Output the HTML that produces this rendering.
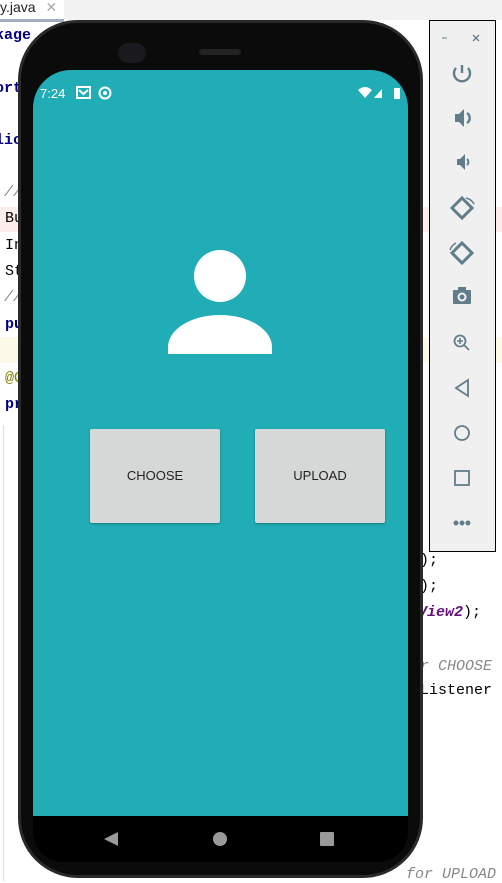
<!DOCTYPE html>
<html><head><style>
*{margin:0;padding:0;box-sizing:border-box}
body{width:502px;height:881px;overflow:hidden;background:#fff;position:relative;font-family:"Liberation Sans",sans-serif}
.c{position:absolute;font-family:"Liberation Mono",monospace;font-size:15px;font-weight:bold;color:#000080;white-space:nowrap}
.a{position:absolute}
</style></head><body>
<div class="a" style="left:0;top:0;width:502px;height:20px;background:#f2f2f2"></div>
<div class="a" style="left:0;top:0;width:64px;height:20px;background:#fff;font-size:14px;color:#222;line-height:15px">y.java <span style="color:#aaa;margin-left:6px">✕</span></div>
<div class="a" style="left:0;top:19px;width:64px;height:3px;background:#a0aec0"></div>
<div class="a" style="left:0;top:207px;width:502px;height:25px;background:#fbeee9"></div>
<div class="a" style="left:0;top:337px;width:502px;height:26px;background:#fdf9e8"></div>
<div class="c" style="left:-5px;top:27px">kage</div>
<div class="c" style="left:-5px;top:80px">ort</div>
<div class="c" style="left:-5px;top:132px">lic</div>
<div class="c" style="left:4px;top:184px;color:#888;font-weight:normal;font-style:italic">//</div>
<div class="c" style="left:5px;top:210px;color:#000;font-weight:normal">Bu</div>
<div class="c" style="left:5px;top:237px;color:#000;font-weight:normal">In</div>
<div class="c" style="left:5px;top:263px;color:#000;font-weight:normal">St</div>
<div class="c" style="left:4px;top:289px;color:#888;font-weight:normal;font-style:italic">//</div>
<div class="c" style="left:5px;top:316px">pu</div>
<div class="c" style="left:5px;top:370px;color:#808000;font-weight:normal">@O</div>
<div class="c" style="left:5px;top:396px">pr</div>
<div class="c" style="left:420px;top:552px;color:#000;font-weight:normal">);</div>
<div class="c" style="left:420px;top:578px;color:#000;font-weight:normal">);</div>
<div class="c" style="left:418px;top:604px;color:#660e7a;font-style:italic">View2<span style="color:#000;font-style:normal;font-weight:normal">);</span></div>
<div class="c" style="left:420px;top:658px;color:#888;font-weight:normal;font-style:italic">r CHOOSE</div>
<div class="c" style="left:420px;top:682px;color:#000;font-weight:normal">Listener</div>
<div class="c" style="left:406px;top:866px;color:#888;font-weight:normal;font-style:italic">for UPLOAD</div>
<div class="a" style="left:3px;top:425px;width:1px;height:456px;background:#ddd"></div>

<div class="a" style="left:18px;top:20px;width:405px;height:858px;background:#0b0b0c;border-radius:60px;border:3px solid #2a2a2a"></div>
<div class="a" style="left:118px;top:43px;width:28px;height:20px;border-radius:10px;background:#1a1a1e"></div>
<div class="a" style="left:199px;top:49px;width:42px;height:6px;border-radius:3px;background:#222"></div>
<div class="a" style="left:33px;top:70px;width:375px;height:746px;background:#21adb5;border-radius:38px 38px 0 0"></div>
<div class="a" style="left:33px;top:816px;width:375px;height:46px;background:#000;border-radius:0 0 30px 30px"></div>
<div class="a" style="left:40px;top:86px;font-size:13px;color:#fff">7:24</div>
<svg class="a" style="left:76px;top:86px" width="36" height="14"><rect x="1" y="1" width="13" height="11" fill="none" stroke="#fff" stroke-width="2"/><path d="M3 4l4.5 4L12 4" stroke="#fff" stroke-width="2" fill="none"/><circle cx="29" cy="7" r="5.5" fill="none" stroke="#fff" stroke-width="2"/><circle cx="29" cy="7" r="2" fill="#fff"/></svg>
<svg class="a" style="left:358px;top:86px" width="46" height="14"><path d="M0 4Q7-2 14 4L7 12Z" fill="#fff"/><path d="M16 12L24 3V12Z" fill="#fff"/><rect x="36" y="2" width="6" height="11" fill="#fff"/></svg>
<div class="a" style="left:194px;top:250px;width:52px;height:52px;border-radius:50%;background:#fff"></div>
<div class="a" style="left:168px;top:315px;width:104px;height:39px;background:#fff;border-radius:52px 52px 0 0/32px 32px 0 0"></div>
<div class="a" style="left:90px;top:429px;width:130px;height:94px;background:#d6d7d7;border-radius:2px;box-shadow:0 1px 2px rgba(0,0,0,.3);font-size:13px;color:#222;text-align:center;line-height:94px">CHOOSE</div>
<div class="a" style="left:255px;top:429px;width:130px;height:94px;background:#d6d7d7;border-radius:2px;box-shadow:0 1px 2px rgba(0,0,0,.3);font-size:13px;color:#222;text-align:center;line-height:94px">UPLOAD</div>
<svg class="a" style="left:100px;top:828px" width="240" height="22"><path d="M4 11L18 4V18Z" fill="#9a9a9a"/><circle cx="120" cy="11" r="7" fill="#9a9a9a"/><rect x="220" y="4" width="14" height="14" rx="1" fill="#9a9a9a"/></svg>

<div class="a" style="left:429px;top:20px;width:67px;height:532px;background:#f0f0f0;border:1px solid #000"></div>
<svg class="a" style="left:429px;top:20px" width="67" height="532" fill="none" stroke="#607d8b" stroke-width="2.4">
<path d="M13 18h5" stroke-width="1"/><path d="M44 15l6 6M50 15l-6 6" stroke-width="1.3"/>
<path d="M33 45v8M27 48a8 8 0 1 0 12 0"/>
<path d="M26 94h4l5-5v18l-5-5h-4z" fill="#607d8b" stroke="none"/><path d="M38 93a6 6 0 0 1 0 10" />
<path d="M28 139h3l5-5v16l-5-5h-3z" fill="#607d8b" stroke="none"/><path d="M38 139a4 4 0 0 1 0 6" stroke-width="2"/>
<path d="M33 178l10 10-10 10-10-10z" stroke-width="3"/><path d="M37 178a12 12 0 0 1 8 6" stroke-width="1.5"/>
<path d="M33 223l10 10-10 10-10-10z" stroke-width="3"/><path d="M21 230a12 12 0 0 1 6-7" stroke-width="1.5"/>
<rect x="24" y="270" width="18" height="14" rx="1" fill="#607d8b" stroke="none"/><rect x="29" y="267" width="8" height="4" fill="#607d8b" stroke="none"/><circle cx="33" cy="277" r="3.5" stroke="#f0f0f0" stroke-width="2"/>
<circle cx="31" cy="321" r="5.5" stroke-width="1.8"/><path d="M35 325l5 5M31 318v6M28 321h6" stroke-width="1.6"/>
<path d="M39 360v16l-12-8z" stroke-width="1.8"/>
<circle cx="33" cy="413" r="7" stroke-width="1.8"/>
<rect x="26" y="451" width="14" height="14" stroke-width="1.8"/>
<circle cx="27" cy="503" r="1.3" fill="#607d8b"/><circle cx="33" cy="503" r="1.3" fill="#607d8b"/><circle cx="39" cy="503" r="1.3" fill="#607d8b"/>
</svg>
</body></html>
